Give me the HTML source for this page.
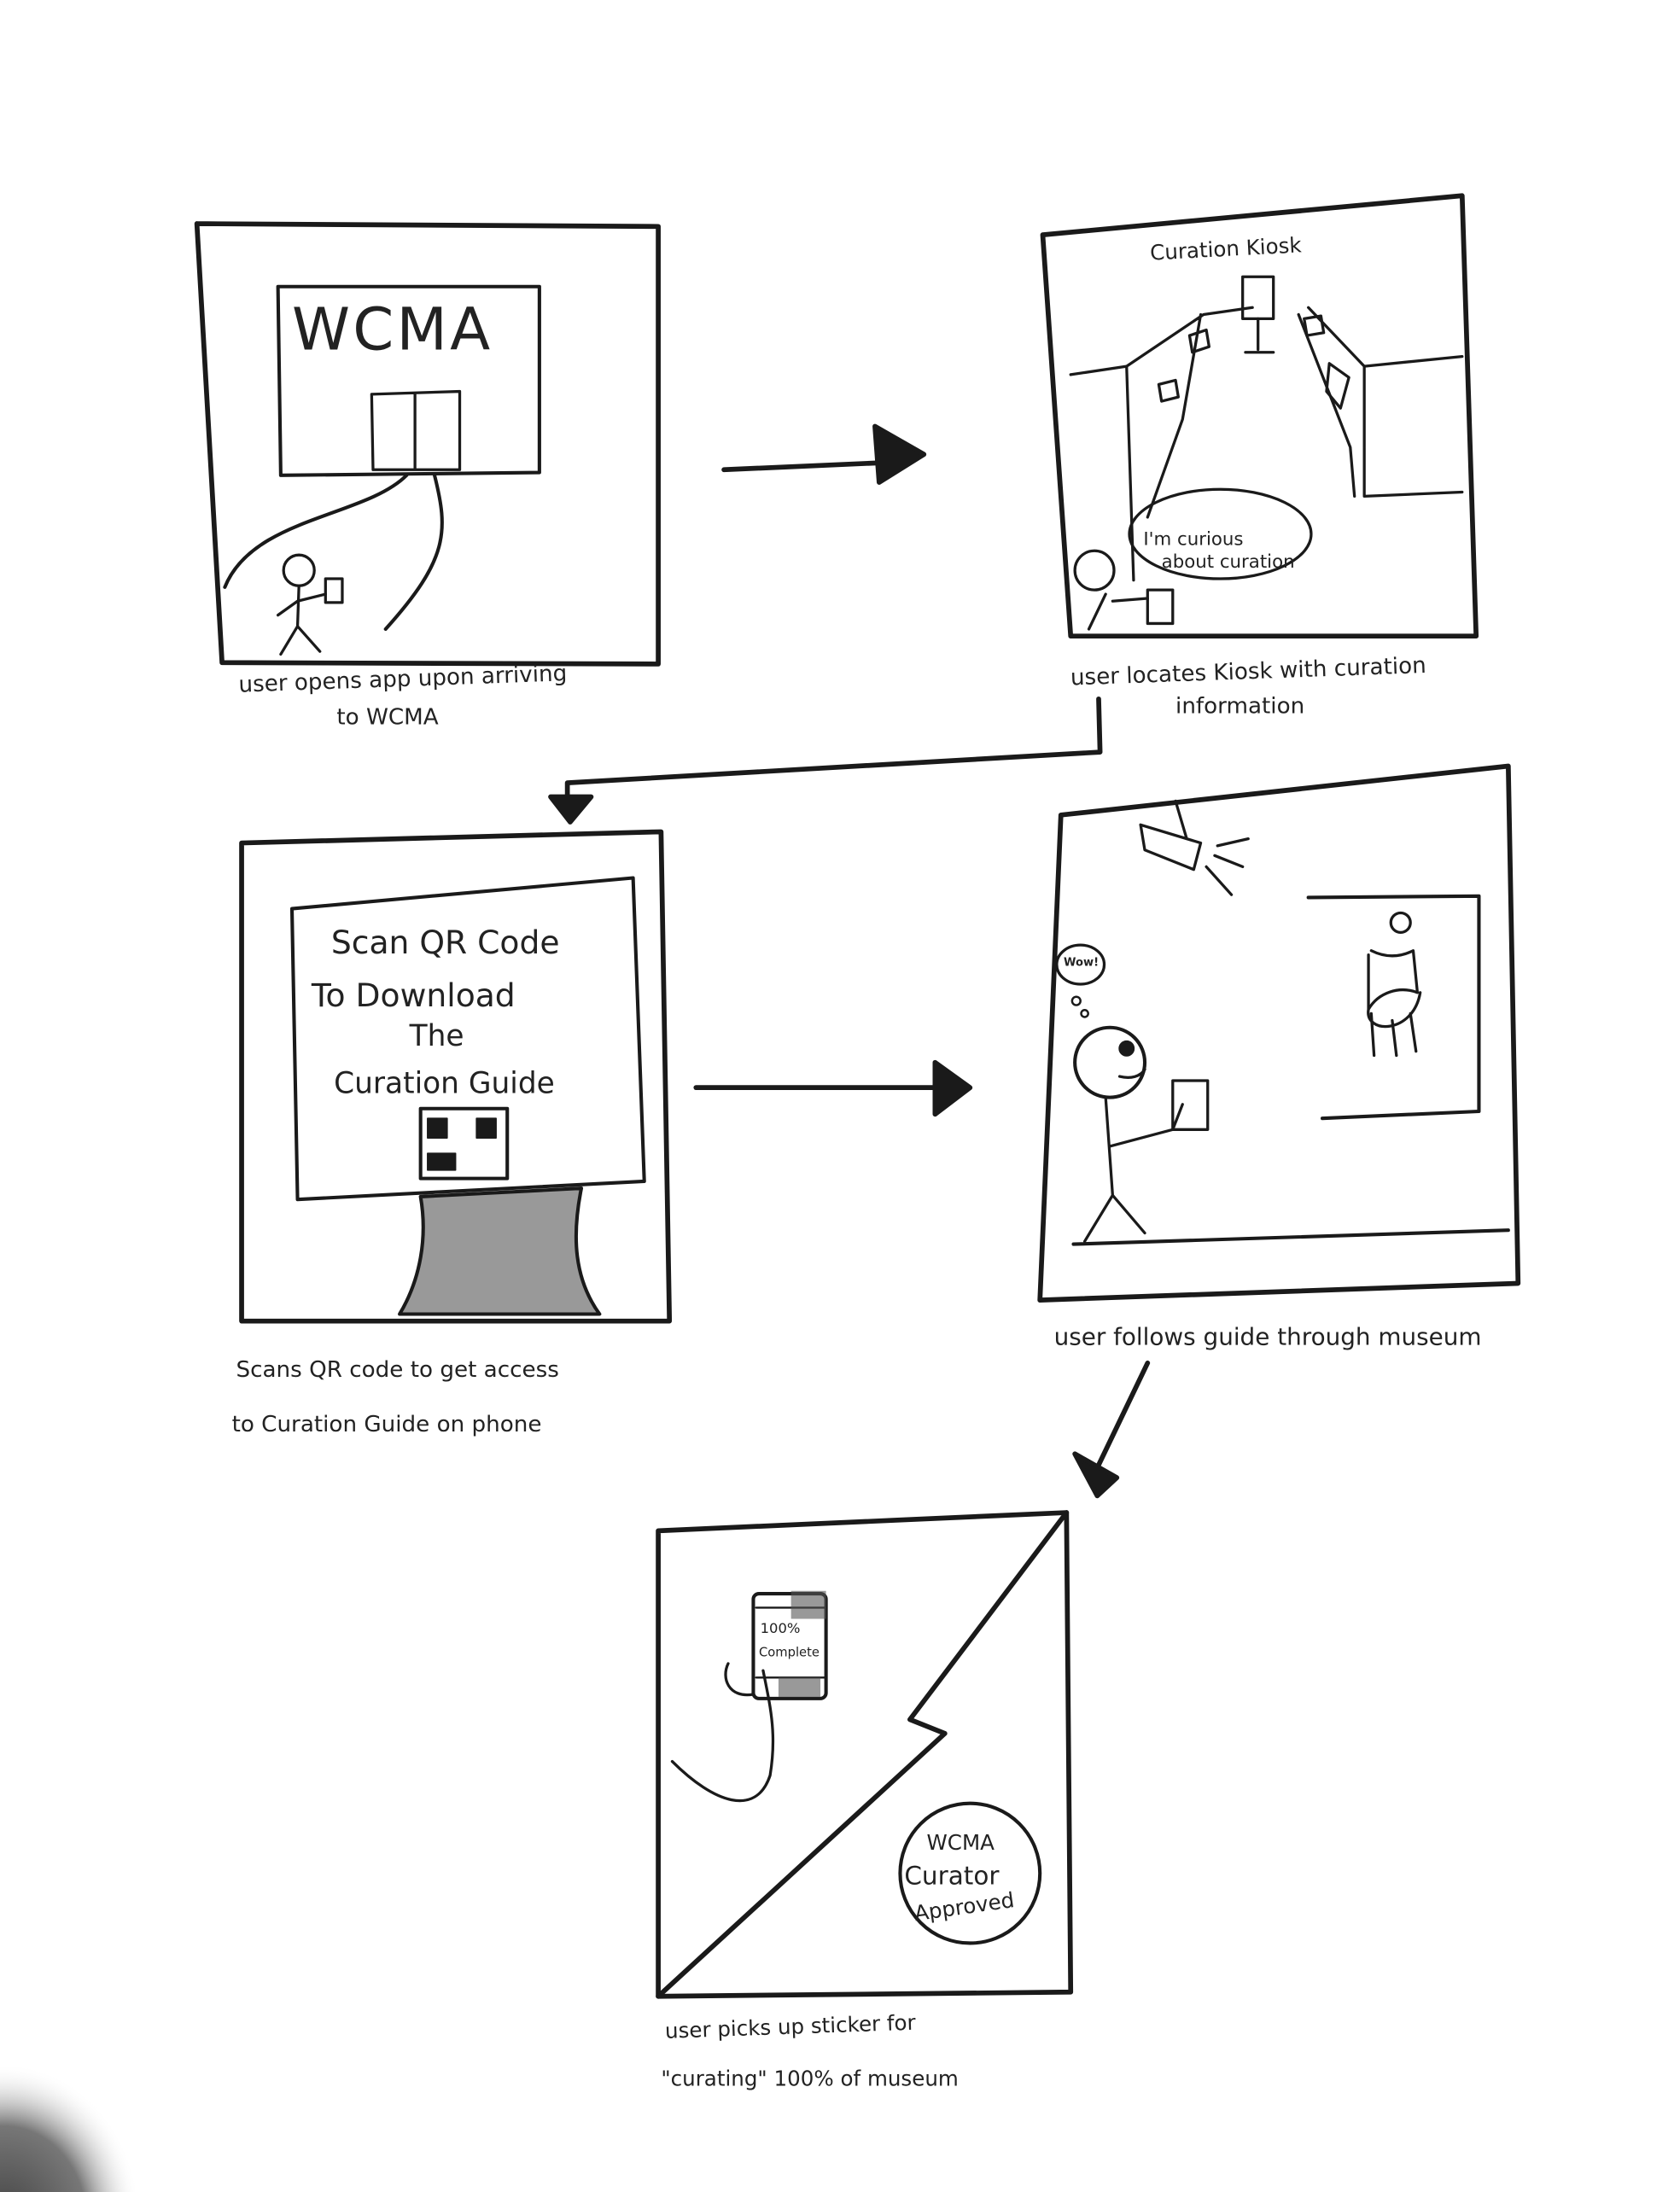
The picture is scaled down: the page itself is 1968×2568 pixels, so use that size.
<!DOCTYPE html>
<html><head><meta charset="utf-8"><style>
html,body{margin:0;padding:0;background:#fff;width:1968px;height:2568px;overflow:hidden}
svg{display:block}
text{font-family:"DejaVu Sans","Liberation Sans",sans-serif;fill:#222}
</style></head><body>
<svg width="1968" height="2568" viewBox="0 0 1200 1568" xmlns="http://www.w3.org/2000/svg">
<defs><radialGradient id="g" cx="0.3" cy="0.8" r="0.7"><stop offset="0" stop-color="#444"/><stop offset="0.6" stop-color="#777"/><stop offset="1" stop-color="#fff" stop-opacity="0"/></radialGradient></defs>
<rect width="1200" height="1568" fill="#fff"/>
<ellipse cx="30" cy="1540" rx="70" ry="80" fill="url(#g)"/>
<g fill="none" stroke="#1a1a1a" stroke-width="3.5" stroke-linecap="round" stroke-linejoin="round">
<path d="M140 160 L470 162 L470 475 L158 474 L140 160"/>
<path d="M198 205 L385 205 L385 338 L200 340 Z" stroke-width="2.5"/>
<path d="M265 282 L328 280 L328 336 L266 336 Z M296 282 L296 336" stroke-width="2"/>
<path d="M290 340 C260 370 180 370 160 420 M310 340 C320 380 320 400 275 450" stroke-width="2.5"/>
<circle cx="213" cy="408" r="11" stroke-width="2"/>
<path d="M213 419 L212 448 L200 468 M212 448 L228 466 M212 430 L198 440 M212 430 L232 425" stroke-width="2"/>
<rect x="232" y="414" width="12" height="17" stroke-width="2"/>
<path d="M517 336 L630 331"/>
<path d="M625 305 L660 325 L628 345 Z" fill="#1a1a1a"/>
<path d="M745 168 L1045 140 L1055 455 L765 455 Z"/>
<path d="M765 268 L805 262 L860 225 L895 220 M935 220 L975 262 L975 355 L1045 352 M805 262 L810 415 M975 262 L1045 255 M858 225 L845 300 L820 370 M928 225 L965 320 L968 355" stroke-width="2"/>
<rect x="888" y="198" width="22" height="30" stroke-width="2"/>
<path d="M899 228 L899 250 M890 252 L910 252" stroke-width="2"/>
<path d="M850 240 L862 236 L864 248 L852 252 Z M828 275 L840 272 L842 284 L830 287 Z M932 228 L944 226 L946 238 L934 240 Z M950 260 L964 270 L958 292 L948 280 Z" stroke-width="2"/>
<ellipse cx="872" cy="382" rx="65" ry="32" stroke-width="2"/>
<circle cx="782" cy="408" r="14" stroke-width="2"/>
<path d="M790 425 L778 450 M795 430 L820 428" stroke-width="2"/>
<rect x="820" y="422" width="18" height="24" stroke-width="2"/>
<path d="M785 500 L786 538 L405 560 L405 572"/>
<path d="M393 570 L422 570 L407 588 Z" fill="#1a1a1a"/>
<path d="M172 603 L472 595 L478 945 L172 945 Z"/>
<path d="M208 650 L452 628 L460 845 L212 858 Z" stroke-width="2.5"/>
<rect x="300" y="793" width="62" height="50" stroke-width="2.5"/>
<path d="M305 800 h14 v14 h-14z M340 800 h14 v14 h-14z M305 825 h20 v12 h-20z" fill="#1a1a1a" stroke-width="1"/>
<path d="M300 856 L415 850 C408 885 410 915 428 940 L285 940 C300 915 305 885 300 856 Z" fill="#999" stroke-width="2.5"/>
<path d="M497 778 L668 778"/>
<path d="M668 760 L693 778 L668 797 Z" fill="#1a1a1a"/>
<path d="M758 583 L1078 548 L1085 918 L743 930 L758 583"/>
<path d="M767 890 L1078 880" stroke-width="2.5"/>
<path d="M935 642 L1057 641 L1057 795 L945 800" stroke-width="2.5"/>
<path d="M815 590 L858 603 L853 622 L818 608 Z M840 573 L848 600" stroke-width="2"/>
<path d="M870 605 L892 600 M868 612 L888 620 M862 620 L880 640" stroke-width="2"/>
<circle cx="1001" cy="660" r="7" stroke-width="2"/>
<path d="M980 680 C990 685 1000 685 1010 680 L1013 710 C1000 705 985 710 978 722 C975 740 1010 740 1015 710 M980 725 L982 755 M995 730 L998 755 M1008 725 L1012 752 M978 683 L978 722" stroke-width="2"/>
<ellipse cx="772" cy="690" rx="17" ry="14" stroke-width="2"/>
<circle cx="769" cy="716" r="3" stroke-width="1.5"/><circle cx="775" cy="725" r="2.5" stroke-width="1.5"/>
<circle cx="793" cy="760" r="25" stroke-width="2.5"/>
<circle cx="805" cy="750" r="4" fill="#1a1a1a"/>
<path d="M800 770 C808 772 815 770 818 765" stroke-width="2"/>
<path d="M790 785 L795 855 L775 888 M795 855 L818 882 M793 820 L838 808 L845 790" stroke-width="2"/>
<rect x="838" y="773" width="25" height="35" stroke-width="2"/>
<path d="M820 975 L784 1050"/>
<path d="M768 1040 L798 1057 L784 1070 Z" fill="#1a1a1a"/>
<path d="M470 1095 L762 1082 L765 1425 L470 1428 Z"/>
<path d="M470 1428 L675 1240 L650 1230 L762 1082"/>
<circle cx="693" cy="1340" r="50" stroke-width="2.5"/>
<path d="M480 1260 C510 1290 540 1300 550 1270 C555 1240 550 1220 545 1195" stroke-width="2"/>
<rect x="538" y="1140" width="52" height="75" rx="4" stroke-width="2.5"/>
<path d="M540 1150 L590 1150 M540 1200 L590 1200" stroke-width="1.5"/>
<path d="M520 1190 C515 1200 520 1215 538 1212" stroke-width="2"/>
</g>
<rect x="565" y="1138" width="25" height="20" fill="#555" opacity="0.6"/>
<rect x="556" y="1200" width="30" height="14" fill="#555" opacity="0.6"/>
<text x="208" y="250" font-size="42" font-family="Liberation Sans" letter-spacing="2" fill="#333">WCMA</text>
<text x="170" y="495" font-size="16" transform="rotate(-2 170 495)">user opens app upon arriving</text>
<text x="240" y="518" font-size="16">to WCMA</text>
<text x="822" y="186" font-size="15" transform="rotate(-3 822 186)">Curation Kiosk</text>
<text x="817" y="390" font-size="13">I'm curious</text>
<text x="830" y="406" font-size="13">about curation</text>
<text x="765" y="490" font-size="16" transform="rotate(-2 765 490)">user locates Kiosk with curation</text>
<text x="840" y="510" font-size="16">information</text>
<text x="236" y="682" font-size="23">Scan QR Code</text>
<text x="222" y="720" font-size="23">To Download</text>
<text x="292" y="748" font-size="21">The</text>
<text x="238" y="782" font-size="21">Curation Guide</text>
<text x="168" y="985" font-size="16">Scans QR code to get access</text>
<text x="165" y="1024" font-size="16">to Curation Guide on phone</text>
<text x="760" y="691" font-size="8" font-weight="bold">Wow!</text>
<text x="753" y="962" font-size="17">user follows guide through museum</text>
<text x="543" y="1168" font-size="10">100%</text>
<text x="542" y="1185" font-size="9">Complete</text>
<text x="662" y="1323" font-size="15">WCMA</text>
<text x="646" y="1348" font-size="18">Curator</text>
<text x="654" y="1374" font-size="15" transform="rotate(-8 654 1374)">Approved</text>
<text x="475" y="1458" font-size="15" transform="rotate(-2 475 1458)">user picks up sticker for</text>
<text x="472" y="1492" font-size="15">"curating" 100% of museum</text>
</svg>
</body></html>
